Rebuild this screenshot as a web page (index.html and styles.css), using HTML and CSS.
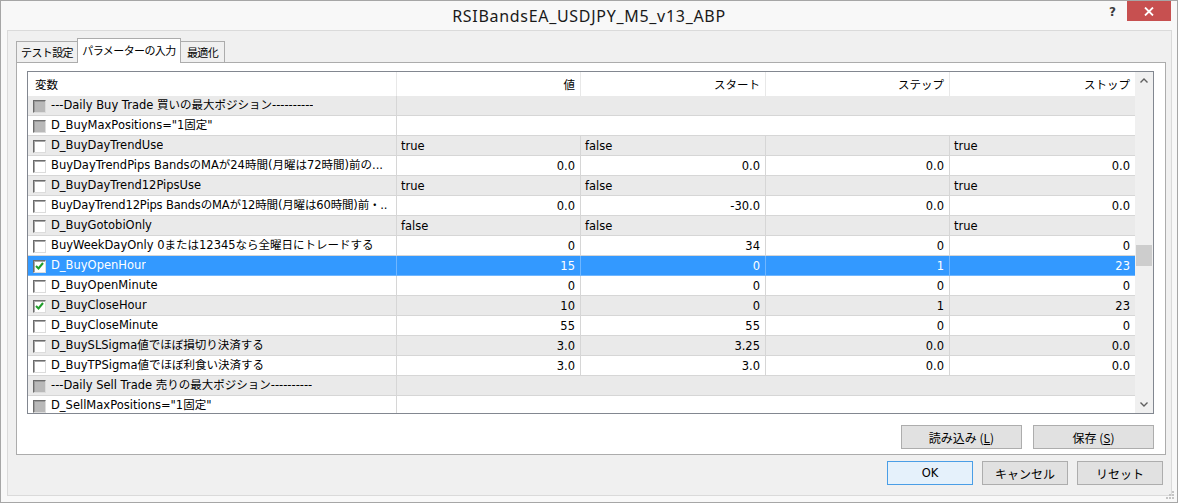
FILE: index.html
```html
<!DOCTYPE html>
<html lang="ja">
<head>
  <meta charset="UTF-8" />
  <title>RSIBandsEA_USDJPY_M5_v13_ABP</title>
  <link rel="stylesheet" href="styles.css">
</head>
<body>

  <div class="window">
    <div class="titlebar">
      <div class="title">RSIBandsEA_USDJPY_M5_v13_ABP</div>
      <div class="win-ctrls">
        <span class="help">?</span>
        <span class="close">
          <svg width="10" height="9" viewBox="0 0 10 9"><path d="M1 0.5 L9 8.5 M9 0.5 L1 8.5" stroke="#fff" stroke-width="1.8"/></svg>
        </span>
      </div>
    </div>

    <div class="client">
      <div class="tabs">
        <div class="tab first">テスト設定</div>
        <div class="tab active">パラメーターの入力</div>
        <div class="tab last">最適化</div>
      </div>

      <div class="panel">
        <div class="list">
          <div class="grid">
            <div class="row head">
              <div class="cell name-h">変数</div>
              <div class="cell num">値</div>
              <div class="cell num">スタート</div>
              <div class="cell num">ステップ</div>
              <div class="cell num">ストップ</div>
            </div>

            <div class="row alt">
              <div class="cell name"><span class="cb dis"></span><span class="txt">---Daily Buy Trade 買いの最大ポジション----------</span></div>
              <div class="cell wide"></div>
            </div>
            <div class="row">
              <div class="cell name"><span class="cb dis"></span><span class="txt">D_BuyMaxPositions="1固定"</span></div>
              <div class="cell wide"></div>
            </div>
            <div class="row alt">
              <div class="cell name"><span class="cb"></span><span class="txt">D_BuyDayTrendUse</span></div>
              <div class="cell">true</div>
              <div class="cell">false</div>
              <div class="cell"></div>
              <div class="cell">true</div>
            </div>
            <div class="row">
              <div class="cell name"><span class="cb"></span><span class="txt">BuyDayTrendPips BandsのMAが24時間(月曜は72時間)前の...</span></div>
              <div class="cell num">0.0</div>
              <div class="cell num">0.0</div>
              <div class="cell num">0.0</div>
              <div class="cell num">0.0</div>
            </div>
            <div class="row alt">
              <div class="cell name"><span class="cb"></span><span class="txt">D_BuyDayTrend12PipsUse</span></div>
              <div class="cell">true</div>
              <div class="cell">false</div>
              <div class="cell"></div>
              <div class="cell">true</div>
            </div>
            <div class="row">
              <div class="cell name"><span class="cb"></span><span class="txt tight">BuyDayTrend12Pips BandsのMAが12時間(月曜は60時間)前・..</span></div>
              <div class="cell num">0.0</div>
              <div class="cell num">-30.0</div>
              <div class="cell num">0.0</div>
              <div class="cell num">0.0</div>
            </div>
            <div class="row alt">
              <div class="cell name"><span class="cb"></span><span class="txt">D_BuyGotobiOnly</span></div>
              <div class="cell">false</div>
              <div class="cell">false</div>
              <div class="cell"></div>
              <div class="cell">true</div>
            </div>
            <div class="row">
              <div class="cell name"><span class="cb"></span><span class="txt">BuyWeekDayOnly 0または12345なら全曜日にトレードする</span></div>
              <div class="cell num">0</div>
              <div class="cell num">34</div>
              <div class="cell num">0</div>
              <div class="cell num">0</div>
            </div>
            <div class="row sel">
              <div class="cell name"><span class="cb on"><svg width="9" height="8" viewBox="0 0 9 8"><path d="M1 4 L3.5 6.5 L8 1" fill="none" stroke="#1f9e2a" stroke-width="2"/></svg></span><span class="txt">D_BuyOpenHour</span></div>
              <div class="cell num">15</div>
              <div class="cell num">0</div>
              <div class="cell num">1</div>
              <div class="cell num">23</div>
            </div>
            <div class="row">
              <div class="cell name"><span class="cb"></span><span class="txt">D_BuyOpenMinute</span></div>
              <div class="cell num">0</div>
              <div class="cell num">0</div>
              <div class="cell num">0</div>
              <div class="cell num">0</div>
            </div>
            <div class="row alt">
              <div class="cell name"><span class="cb on"><svg width="9" height="8" viewBox="0 0 9 8"><path d="M1 4 L3.5 6.5 L8 1" fill="none" stroke="#1f9e2a" stroke-width="2"/></svg></span><span class="txt">D_BuyCloseHour</span></div>
              <div class="cell num">10</div>
              <div class="cell num">0</div>
              <div class="cell num">1</div>
              <div class="cell num">23</div>
            </div>
            <div class="row">
              <div class="cell name"><span class="cb"></span><span class="txt">D_BuyCloseMinute</span></div>
              <div class="cell num">55</div>
              <div class="cell num">55</div>
              <div class="cell num">0</div>
              <div class="cell num">0</div>
            </div>
            <div class="row alt">
              <div class="cell name"><span class="cb"></span><span class="txt">D_BuySLSigma値でほぼ損切り決済する</span></div>
              <div class="cell num">3.0</div>
              <div class="cell num">3.25</div>
              <div class="cell num">0.0</div>
              <div class="cell num">0.0</div>
            </div>
            <div class="row">
              <div class="cell name"><span class="cb"></span><span class="txt">D_BuyTPSigma値でほぼ利食い決済する</span></div>
              <div class="cell num">3.0</div>
              <div class="cell num">3.0</div>
              <div class="cell num">0.0</div>
              <div class="cell num">0.0</div>
            </div>
            <div class="row alt">
              <div class="cell name"><span class="cb dis"></span><span class="txt">---Daily Sell Trade 売りの最大ポジション----------</span></div>
              <div class="cell wide"></div>
            </div>
            <div class="row">
              <div class="cell name"><span class="cb dis"></span><span class="txt">D_SellMaxPositions="1固定"</span></div>
              <div class="cell wide"></div>
            </div>
          </div>

          <div class="scroll">
            <div class="arrow">
              <svg width="8" height="5" viewBox="0 0 8 5"><path d="M0.5 4.5 L4 1 L7.5 4.5" fill="none" stroke="#606060" stroke-width="1.4"/></svg>
            </div>
            <div class="thumb"></div>
            <div class="arrow down">
              <svg width="8" height="5" viewBox="0 0 8 5"><path d="M0.5 0.5 L4 4 L7.5 0.5" fill="none" stroke="#606060" stroke-width="1.4"/></svg>
            </div>
          </div>
        </div>

        <div class="panel-btns">
          <button class="btn wide-btn">読み込み (<u>L</u>)</button>
          <button class="btn wide-btn">保存 (<u>S</u>)</button>
        </div>
      </div>

      <div class="footer">
        <button class="btn default">OK</button>
        <button class="btn">キャンセル</button>
        <button class="btn">リセット</button>
      </div>
    </div>

    <svg class="grip" width="8" height="8" viewBox="0 0 8 8">
      <rect x="6" y="0" width="2" height="2" fill="#c4c4c4"/>
      <rect x="3" y="3" width="2" height="2" fill="#c4c4c4"/>
      <rect x="6" y="3" width="2" height="2" fill="#c4c4c4"/>
      <rect x="0" y="6" width="2" height="2" fill="#c4c4c4"/>
      <rect x="3" y="6" width="2" height="2" fill="#c4c4c4"/>
      <rect x="6" y="6" width="2" height="2" fill="#c4c4c4"/>
    </svg>
  </div>

</body>
</html>
```

FILE: styles.css
```css
* {
  box-sizing: border-box;
  margin: 0;
  padding: 0;
}

body {
  font-family: 'DejaVu Sans', 'Noto Sans CJK JP', sans-serif;
  font-size: 11.5px;
  color: #000;
  background: #f0f0f0;
}

.window {
  position: relative;
  width: 1178px;
  height: 503px;
  border: 1px solid #a6a6a6;
  background: #f8f8f8;
  display: flex;
  flex-direction: column;
}

/* title bar */
.titlebar {
  height: 29px;
  display: grid;
  grid-template-columns: 1fr auto 1fr;
  align-items: start;
}

.title {
  grid-column: 2;
  font-family: 'Noto Sans', sans-serif;
  font-size: 16px;
  letter-spacing: 0.7px;
  color: #1a1a1a;
  padding-top: 4px;
}

.win-ctrls {
  grid-column: 3;
  justify-self: end;
  display: flex;
  align-items: flex-start;
  margin-right: 6px;
}

.help {
  font-family: 'DejaVu Sans', sans-serif;
  font-weight: bold;
  font-size: 12px;
  color: #3c3c3c;
  margin: 4px 11px 0 0;
}

.close {
  width: 44px;
  height: 20px;
  background: #c75050;
  display: flex;
  align-items: center;
  justify-content: center;
}

/* client area */
.client {
  flex: 1;
  margin: 0 5px 6px 6px;
  border: 1px solid #dadada;
  background: #f0f0f0;
  padding: 7px 5px 0 8px;
  display: flex;
  flex-direction: column;
}

.tabs {
  display: flex;
  align-items: flex-end;
  height: 24px;
  position: relative;
  z-index: 1;
}

.tab {
  height: 21px;
  border: 1px solid #acacac;
  border-bottom: none;
  background: #f0f0f0;
  font-family: 'Noto Sans CJK JP', sans-serif;
  font-size: 11px;
  letter-spacing: -0.6px;
  line-height: 20px;
  text-align: center;
  white-space: nowrap;
  color: #000;
}

.tab.first {
  width: 61px;
  border-right: none;
}

.tab.active {
  width: 104px;
  height: 25px;
  margin-bottom: -1px;
  background: #fff;
  line-height: 22px;
}

.tab.last {
  width: 44px;
  border-left: none;
}

.panel {
  height: 393px;
  border: 1px solid #acacac;
  background: #fff;
  padding: 8px 11px 0 10px;
  display: flex;
  flex-direction: column;
}

/* parameter list */
.list {
  height: 343px;
  border: 1px solid #828790;
  display: flex;
}

.grid {
  flex: 1;
  overflow: hidden;
}

.row {
  display: grid;
  grid-template-columns: 369px 184px 185px 184px 185px;
  height: 20px;
}

.cell {
  border-right: 1px solid #d6d6d6;
  border-bottom: 1px solid #d6d6d6;
  padding: 0 5px 0 4px;
  line-height: 21px;
  white-space: nowrap;
  overflow: hidden;
}

.cell:last-child {
  border-right: none;
}

.cell.wide {
  grid-column: span 4;
}

.num {
  text-align: right;
}

.row.alt {
  background: #eaeaea;
}

.row.sel {
  background: #3399ff;
  color: #fff;
}

.row.sel .cell {
  border-color: #6fb6ff;
}

.row.head {
  height: 24px;
}

.row.head .cell {
  border-bottom: none;
  border-right-color: #e8e8e8;
  line-height: 25px;
  font-family: 'Noto Sans CJK JP', sans-serif;
  font-size: 11.5px;
}

.row.head .name-h {
  padding-left: 7px;
}

.name {
  display: flex;
  align-items: center;
  gap: 5px;
  padding-left: 5px;
}

.txt {
  overflow: hidden;
}

.txt.tight {
  letter-spacing: -0.15px;
}

.cb {
  flex: none;
  width: 13px;
  height: 13px;
  margin-top: 1px;
  border: 1px solid;
  border-color: #6c6c6c #dcdcdc #dcdcdc #6c6c6c;
  box-shadow: inset 1px 1px 0 #a8a8a8;
  background: #fff;
  display: flex;
  align-items: center;
  justify-content: center;
}

.cb.dis {
  background: #b9b9b9;
  box-shadow: inset 1px 1px 0 #9a9a9a;
}

/* scrollbar */
.scroll {
  width: 18px;
  background: #f0f0f0;
  display: flex;
  flex-direction: column;
}

.arrow {
  height: 17px;
  display: flex;
  align-items: center;
  justify-content: center;
}

.arrow.down {
  margin-top: auto;
}

.thumb {
  height: 21px;
  margin: 156px 1px 0 1px;
  background: #cdcdcd;
}

/* buttons */
.panel-btns {
  display: flex;
  justify-content: flex-end;
  gap: 11px;
  margin-top: 11px;
}

.btn {
  width: 86px;
  height: 24px;
  border: 1px solid #adadad;
  background: #e1e1e1;
  font-family: 'Noto Sans CJK JP', sans-serif;
  font-size: 12px;
  color: #000;
  display: flex;
  align-items: center;
  justify-content: center;
}

.btn.wide-btn {
  width: 121px;
}

.btn.default {
  border-color: #4a9ee6;
  background: #e5f1fb;
  font-family: 'DejaVu Sans', sans-serif;
  font-size: 11.5px;
}

.footer {
  display: flex;
  justify-content: flex-end;
  gap: 9px;
  padding: 6px 3px 0 0;
}

.grip {
  position: absolute;
  right: 3px;
  bottom: 3px;
}
```
